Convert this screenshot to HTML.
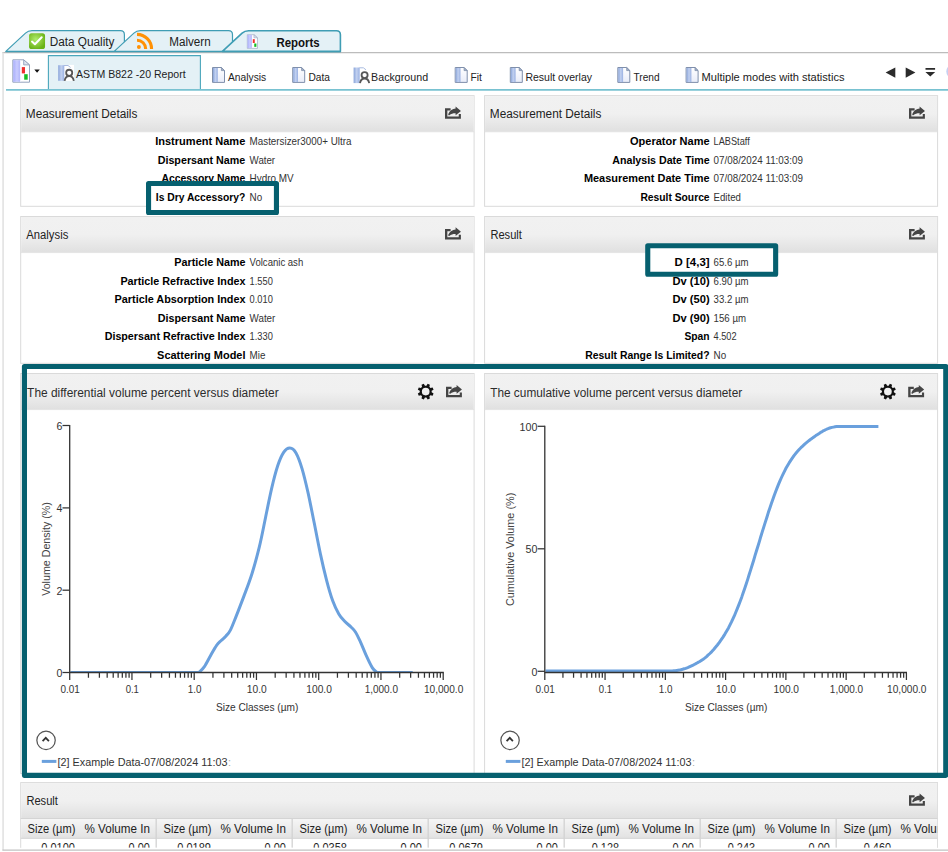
<!DOCTYPE html>
<html lang="en"><head><meta charset="utf-8"><title>Reports</title>
<style>
html,body{margin:0;padding:0;background:#fff;}
body{width:948px;height:852px;overflow:hidden;}
svg{display:block;font-family:"Liberation Sans", sans-serif;}
</style></head><body>
<svg width="948" height="852" viewBox="0 0 948 852">
<defs>
<linearGradient id="hdr" x1="0" y1="0" x2="0" y2="1"><stop offset="0" stop-color="#f1f1f1"/><stop offset="0.5" stop-color="#f0f0f0"/><stop offset="1" stop-color="#e0e0e0"/></linearGradient>
<linearGradient id="thd" x1="0" y1="0" x2="0" y2="1"><stop offset="0" stop-color="#f6f6f6"/><stop offset="1" stop-color="#e2e2e2"/></linearGradient>
<linearGradient id="docb" x1="0" y1="0" x2="1" y2="0"><stop offset="0" stop-color="#8aa5da"/><stop offset="0.5" stop-color="#c2d1f0"/><stop offset="1" stop-color="#9ab1e2"/></linearGradient>
<linearGradient id="docw" x1="0" y1="0" x2="0" y2="1"><stop offset="0" stop-color="#ffffff"/><stop offset="1" stop-color="#e8ecf9"/></linearGradient>
<linearGradient id="repb" x1="0" y1="0" x2="1" y2="0"><stop offset="0" stop-color="#a9aefb"/><stop offset="0.5" stop-color="#c9ccff"/><stop offset="0.85" stop-color="#b6bafa"/><stop offset="1" stop-color="#eceeff"/></linearGradient>
<radialGradient id="grn" cx="0.42" cy="0.4" r="0.62"><stop offset="0" stop-color="#aeee6e"/><stop offset="0.55" stop-color="#8ccc3e"/><stop offset="1" stop-color="#69b317"/></radialGradient>
<g id="share" fill="#454545">
 <path d="M0,1.6 H5.6 V3.95 H2.35 V9.85 H13.75 V7.45 H15.9 V12.2 H0 Z"/>
 <path d="M10.6,-0.1 L15.95,4.3 L10.6,8.6 V6.7 C8.2,6.6 6.3,7.2 4.3,8.7 C3.4,8.8 3.0,8.0 3.4,7.1 C4.9,3.9 7.5,2.2 10.6,2.0 Z"/>
</g>
<g id="doc">
 <path d="M0.5,0.5 H9.4 L12.5,3.6 V15.4 H0.5 Z" fill="url(#docw)" stroke="#7f8fab" stroke-width="1"/>
 <rect x="1" y="1" width="4.8" height="14" fill="url(#docb)"/>
 <path d="M9.4,0.5 V3.6 H12.5 Z" fill="#a5b2ca" stroke="#7f8fab" stroke-width="0.8"/>
</g>
<g id="docp">
 <rect x="6" y="0" width="10" height="16" fill="#fff"/>
 <rect x="0.2" y="0.3" width="6.1" height="15.6" fill="url(#docb)"/>
 <path d="M6,0.6 H10 L12.6,2.6" fill="none" stroke="#a9bbe0" stroke-width="1"/>
 <circle cx="11.2" cy="7.9" r="3.05" fill="#fff" stroke="#575757" stroke-width="1.8"/>
 <path d="M6.6,16 C7.2,12.6 9,11.3 11.2,11.3 C13.4,11.3 15.2,12.6 15.8,16" fill="none" stroke="#575757" stroke-width="1.8"/>
</g>
<g id="gear" fill="#111">
 <path fill-rule="evenodd" d="M5.95,0.73 L7.86,1.95 L6.94,4.18 L4.73,3.69 L3.69,4.73 L4.18,6.94 L1.95,7.86 L0.73,5.95 L-0.73,5.95 L-1.95,7.86 L-4.18,6.94 L-3.69,4.73 L-4.73,3.69 L-6.94,4.18 L-7.86,1.95 L-5.95,0.73 L-5.95,-0.73 L-7.86,-1.95 L-6.94,-4.18 L-4.73,-3.69 L-3.69,-4.73 L-4.18,-6.94 L-1.95,-7.86 L-0.73,-5.95 L0.73,-5.95 L1.95,-7.86 L4.18,-6.94 L3.69,-4.73 L4.73,-3.69 L6.94,-4.18 L7.86,-1.95 L5.95,-0.73 Z M3.85,0 A3.85,3.85 0 1 0 -3.85,0 A3.85,3.85 0 1 0 3.85,0 Z"/>
</g>
</defs>
<rect x="0" y="0" width="948" height="852" fill="#fff"/>
<path d="M2.4,52.6 H948" stroke="#bcbcbc" stroke-width="1.1" fill="none"/>
<path d="M3.1,52.6 V850.2" stroke="#e2e2e2" stroke-width="1.6" fill="none"/>
<path d="M5.8,51.4 L25.5,33.1 Q28.1,30.7 32.0,30.7 H120.4 Q124.4,30.7 124.4,34.7 V51.4 Z" fill="#e4f1f6" stroke="#3f9db4" stroke-width="1.2" stroke-linejoin="round"/>
<path d="M114.2,51.4 L133.9,33.1 Q136.5,30.7 140.4,30.7 H228.5 Q232.5,30.7 232.5,34.7 V51.4 Z" fill="#e4f1f6" stroke="#3f9db4" stroke-width="1.2" stroke-linejoin="round"/>
<path d="M222.4,51.4 L242.1,33.1 Q244.7,30.7 248.6,30.7 H336.4 Q340.4,30.7 340.4,34.7 V51.4 Z" fill="#e4f1f6" stroke="#3f9db4" stroke-width="1.6" stroke-linejoin="round"/>
<path d="M5.8,51.6 H340.6" stroke="#3f9db4" stroke-width="1.3"/>
<rect x="29.05" y="33.2" width="16" height="15.8" rx="2.6" fill="url(#grn)"/>
<path d="M32.0,41.6 L34.9,44.3 L41.7,37.2" fill="none" stroke="#fff" stroke-width="2.0" stroke-linecap="round" stroke-linejoin="round"/>
<text x="49.7" y="45.9" font-size="12" text-anchor="start" textLength="64.8" lengthAdjust="spacingAndGlyphs" fill="#222">Data Quality</text>
<g fill="none" stroke="#ff9105" stroke-width="3.1"><path d="M137,34.35 A14.55,14.55 0 0 1 151.55,48.9"/><path d="M137,40.2 A8.7,8.7 0 0 1 145.7,48.9"/></g><circle cx="138.9" cy="47" r="1.95" fill="#ff9105"/>
<text x="169.3" y="45.9" font-size="12" text-anchor="start" textLength="41.4" lengthAdjust="spacingAndGlyphs" fill="#222">Malvern</text>
<g transform="translate(247,34.4) scale(0.61)"><path d="M0.5,0.5 H11.4 L17.2,5.6 V22.9 H0.5 Z" fill="#fff" stroke="#94a3bd" stroke-width="1"/><rect x="0.9" y="0.9" width="7.4" height="21.6" fill="url(#repb)"/><path d="M11.4,0.5 V5.6 H17.2 Z" fill="#dde4f0" stroke="#94a3bd" stroke-width="0.9" stroke-linejoin="round"/><rect x="9.5" y="7.8" width="3.2" height="6.3" fill="#f03030"/><rect x="11.9" y="14.9" width="3.5" height="5.5" fill="#14c024"/></g>
<text x="276.5" y="46.6" font-size="12" font-weight="bold" text-anchor="start" textLength="43.2" lengthAdjust="spacingAndGlyphs" fill="#111">Reports</text>
<g transform="translate(12.3,59.3) scale(1.0)"><path d="M0.5,0.5 H11.4 L17.2,5.6 V22.9 H0.5 Z" fill="#fff" stroke="#94a3bd" stroke-width="1"/><rect x="0.9" y="0.9" width="7.4" height="21.6" fill="url(#repb)"/><path d="M11.4,0.5 V5.6 H17.2 Z" fill="#dde4f0" stroke="#94a3bd" stroke-width="0.9" stroke-linejoin="round"/><rect x="9.5" y="7.8" width="3.2" height="6.3" fill="#f03030"/><rect x="11.9" y="14.9" width="3.5" height="5.5" fill="#14c024"/></g>
<path d="M34.3,69.5 H39.8 L37.05,72.7 Z" fill="#111"/>
<path d="M48.4,89.5 V55.6 H200.4 V89.5" fill="#e4f1f6" stroke="#4aa6bb" stroke-width="1.1"/>
<path d="M6,89.85 H948" stroke="#78c2d1" stroke-width="1.7"/>
<use href="#docp" x="58" y="64.9"/>
<text x="76.0" y="77.8" font-size="11" text-anchor="start" textLength="109.6" lengthAdjust="spacingAndGlyphs" fill="#222">ASTM B822 -20 Report</text>
<use href="#doc" x="212" y="67.0"/>
<text x="228.0" y="80.9" font-size="11" text-anchor="start" textLength="38.2" lengthAdjust="spacingAndGlyphs" fill="#222">Analysis</text>
<use href="#doc" x="292.2" y="67.0"/>
<text x="308.4" y="80.9" font-size="11" text-anchor="start" textLength="21.5" lengthAdjust="spacingAndGlyphs" fill="#222">Data</text>
<use href="#docp" x="353.4" y="67.2"/>
<text x="371.1" y="80.9" font-size="11" text-anchor="start" textLength="57.0" lengthAdjust="spacingAndGlyphs" fill="#222">Background</text>
<use href="#doc" x="454.7" y="67.0"/>
<text x="470.4" y="80.9" font-size="11" text-anchor="start" textLength="11.4" lengthAdjust="spacingAndGlyphs" fill="#222">Fit</text>
<use href="#doc" x="509.8" y="67.0"/>
<text x="525.4" y="80.9" font-size="11" text-anchor="start" textLength="66.6" lengthAdjust="spacingAndGlyphs" fill="#222">Result overlay</text>
<use href="#doc" x="617.3" y="67.0"/>
<text x="633.5" y="80.9" font-size="11" text-anchor="start" textLength="26.1" lengthAdjust="spacingAndGlyphs" fill="#222">Trend</text>
<use href="#doc" x="685.6" y="67.0"/>
<text x="701.6" y="80.9" font-size="11" text-anchor="start" textLength="142.9" lengthAdjust="spacingAndGlyphs" fill="#222">Multiple modes with statistics</text>
<path d="M895.3,67.4 V77.8 L885.6,72.6 Z" fill="#2b2b2b"/>
<path d="M905.7,67.4 V77.8 L915.4,72.6 Z" fill="#2b2b2b"/>
<path d="M925.5,67.9 H935.1 V69.7 H925.5 Z M925.4,71.9 H935.2 L930.3,76.4 Z" fill="#2b2b2b"/>
<circle cx="953.7" cy="71.4" r="7.4" fill="#c6d0f1"/>
<rect x="20.7" y="95.65" width="453.4" height="110.65" fill="#fff" stroke="#dadada" stroke-width="1"/>
<rect x="21.2" y="96.15" width="452.4" height="35.4" fill="url(#hdr)"/>
<path d="M20.7,131.75 H474.09999999999997" stroke="#dedede" stroke-width="0.8"/>
<use href="#share" x="445.0" y="106.6"/>
<text x="25.8" y="118.3" font-size="12" text-anchor="start" textLength="111.6" lengthAdjust="spacingAndGlyphs" fill="#222">Measurement Details</text>
<text x="245.3" y="145.2" font-size="11" font-weight="bold" text-anchor="end" textLength="90.1" lengthAdjust="spacingAndGlyphs" fill="#000">Instrument Name</text>
<text x="249.6" y="145.2" font-size="10.2" text-anchor="start" textLength="101.8" lengthAdjust="spacingAndGlyphs" fill="#333">Mastersizer3000+ Ultra</text>
<text x="245.3" y="163.7" font-size="11" font-weight="bold" text-anchor="end" textLength="87.6" lengthAdjust="spacingAndGlyphs" fill="#000">Dispersant Name</text>
<text x="249.6" y="163.7" font-size="10.2" text-anchor="start" textLength="25.5" lengthAdjust="spacingAndGlyphs" fill="#333">Water</text>
<text x="245.3" y="182.2" font-size="11" font-weight="bold" text-anchor="end" textLength="83.8" lengthAdjust="spacingAndGlyphs" fill="#000">Accessory Name</text>
<text x="249.6" y="182.2" font-size="10.2" text-anchor="start" textLength="44.1" lengthAdjust="spacingAndGlyphs" fill="#333">Hydro MV</text>
<text x="245.3" y="200.8" font-size="11" font-weight="bold" text-anchor="end" textLength="89.5" lengthAdjust="spacingAndGlyphs" fill="#000">Is Dry Accessory?</text>
<text x="249.6" y="200.8" font-size="10.2" text-anchor="start" textLength="12.6" lengthAdjust="spacingAndGlyphs" fill="#333">No</text>
<rect x="484.6" y="95.65" width="453.0" height="110.65" fill="#fff" stroke="#dadada" stroke-width="1"/>
<rect x="485.1" y="96.15" width="452.0" height="35.4" fill="url(#hdr)"/>
<path d="M484.6,131.75 H937.6" stroke="#dedede" stroke-width="0.8"/>
<use href="#share" x="909.0" y="106.6"/>
<text x="489.8" y="118.3" font-size="12" text-anchor="start" textLength="111.6" lengthAdjust="spacingAndGlyphs" fill="#222">Measurement Details</text>
<text x="709.6" y="145.2" font-size="11" font-weight="bold" text-anchor="end" textLength="79.6" lengthAdjust="spacingAndGlyphs" fill="#000">Operator Name</text>
<text x="713.6" y="145.2" font-size="10.2" text-anchor="start" textLength="36.1" lengthAdjust="spacingAndGlyphs" fill="#333">LABStaff</text>
<text x="709.6" y="163.7" font-size="11" font-weight="bold" text-anchor="end" textLength="97.3" lengthAdjust="spacingAndGlyphs" fill="#000">Analysis Date Time</text>
<text x="713.6" y="163.7" font-size="10.2" text-anchor="start" textLength="89.3" lengthAdjust="spacingAndGlyphs" fill="#333">07/08/2024 11:03:09</text>
<text x="709.6" y="182.2" font-size="11" font-weight="bold" text-anchor="end" textLength="125.7" lengthAdjust="spacingAndGlyphs" fill="#000">Measurement Date Time</text>
<text x="713.6" y="182.2" font-size="10.2" text-anchor="start" textLength="89.3" lengthAdjust="spacingAndGlyphs" fill="#333">07/08/2024 11:03:09</text>
<text x="709.6" y="200.8" font-size="11" font-weight="bold" text-anchor="end" textLength="69.2" lengthAdjust="spacingAndGlyphs" fill="#000">Result Source</text>
<text x="713.6" y="200.8" font-size="10.2" text-anchor="start" textLength="27.3" lengthAdjust="spacingAndGlyphs" fill="#333">Edited</text>
<rect x="20.7" y="216.5" width="453.4" height="146.8" fill="#fff" stroke="#dadada" stroke-width="1"/>
<rect x="21.2" y="217.0" width="452.4" height="35.4" fill="url(#hdr)"/>
<path d="M20.7,252.6 H474.09999999999997" stroke="#dedede" stroke-width="0.8"/>
<use href="#share" x="445.0" y="227.4"/>
<text x="26.3" y="239.2" font-size="12" text-anchor="start" textLength="42.0" lengthAdjust="spacingAndGlyphs" fill="#222">Analysis</text>
<text x="245.5" y="266.2" font-size="11" font-weight="bold" text-anchor="end" textLength="71.2" lengthAdjust="spacingAndGlyphs" fill="#000">Particle Name</text>
<text x="249.6" y="266.2" font-size="10.2" text-anchor="start" textLength="53.6" lengthAdjust="spacingAndGlyphs" fill="#333">Volcanic ash</text>
<text x="245.5" y="284.7" font-size="11" font-weight="bold" text-anchor="end" textLength="125.1" lengthAdjust="spacingAndGlyphs" fill="#000">Particle Refractive Index</text>
<text x="249.6" y="284.7" font-size="10.2" text-anchor="start" textLength="23.2" lengthAdjust="spacingAndGlyphs" fill="#333">1.550</text>
<text x="245.5" y="303.2" font-size="11" font-weight="bold" text-anchor="end" textLength="130.9" lengthAdjust="spacingAndGlyphs" fill="#000">Particle Absorption Index</text>
<text x="249.6" y="303.2" font-size="10.2" text-anchor="start" textLength="23.2" lengthAdjust="spacingAndGlyphs" fill="#333">0.010</text>
<text x="245.5" y="321.8" font-size="11" font-weight="bold" text-anchor="end" textLength="87.7" lengthAdjust="spacingAndGlyphs" fill="#000">Dispersant Name</text>
<text x="249.6" y="321.8" font-size="10.2" text-anchor="start" textLength="25.7" lengthAdjust="spacingAndGlyphs" fill="#333">Water</text>
<text x="245.5" y="340.3" font-size="11" font-weight="bold" text-anchor="end" textLength="140.8" lengthAdjust="spacingAndGlyphs" fill="#000">Dispersant Refractive Index</text>
<text x="249.6" y="340.3" font-size="10.2" text-anchor="start" textLength="23.2" lengthAdjust="spacingAndGlyphs" fill="#333">1.330</text>
<text x="245.5" y="358.8" font-size="11" font-weight="bold" text-anchor="end" textLength="88.4" lengthAdjust="spacingAndGlyphs" fill="#000">Scattering Model</text>
<text x="249.6" y="358.8" font-size="10.2" text-anchor="start" textLength="15.8" lengthAdjust="spacingAndGlyphs" fill="#333">Mie</text>
<rect x="484.6" y="216.5" width="453.0" height="146.8" fill="#fff" stroke="#dadada" stroke-width="1"/>
<rect x="485.1" y="217.0" width="452.0" height="35.4" fill="url(#hdr)"/>
<path d="M484.6,252.6 H937.6" stroke="#dedede" stroke-width="0.8"/>
<use href="#share" x="909.0" y="227.4"/>
<text x="490.4" y="239.2" font-size="12" text-anchor="start" textLength="31.5" lengthAdjust="spacingAndGlyphs" fill="#222">Result</text>
<text x="709.6" y="266.2" font-size="11" font-weight="bold" text-anchor="end" textLength="35.0" lengthAdjust="spacingAndGlyphs" fill="#000">D [4,3]</text>
<text x="713.6" y="266.2" font-size="10.2" text-anchor="start" textLength="34.9" lengthAdjust="spacingAndGlyphs" fill="#333">65.6 µm</text>
<text x="709.6" y="284.7" font-size="11" font-weight="bold" text-anchor="end" textLength="37.1" lengthAdjust="spacingAndGlyphs" fill="#000">Dv (10)</text>
<text x="713.6" y="284.7" font-size="10.2" text-anchor="start" textLength="34.9" lengthAdjust="spacingAndGlyphs" fill="#333">6.90 µm</text>
<text x="709.6" y="303.2" font-size="11" font-weight="bold" text-anchor="end" textLength="37.1" lengthAdjust="spacingAndGlyphs" fill="#000">Dv (50)</text>
<text x="713.6" y="303.2" font-size="10.2" text-anchor="start" textLength="34.9" lengthAdjust="spacingAndGlyphs" fill="#333">33.2 µm</text>
<text x="709.6" y="321.8" font-size="11" font-weight="bold" text-anchor="end" textLength="37.1" lengthAdjust="spacingAndGlyphs" fill="#000">Dv (90)</text>
<text x="713.6" y="321.8" font-size="10.2" text-anchor="start" textLength="32.4" lengthAdjust="spacingAndGlyphs" fill="#333">156 µm</text>
<text x="709.6" y="340.3" font-size="11" font-weight="bold" text-anchor="end" textLength="25.2" lengthAdjust="spacingAndGlyphs" fill="#000">Span</text>
<text x="713.6" y="340.3" font-size="10.2" text-anchor="start" textLength="23.0" lengthAdjust="spacingAndGlyphs" fill="#333">4.502</text>
<text x="709.6" y="358.8" font-size="11" font-weight="bold" text-anchor="end" textLength="124.4" lengthAdjust="spacingAndGlyphs" fill="#000">Result Range Is Limited?</text>
<text x="713.6" y="358.8" font-size="10.2" text-anchor="start" textLength="12.6" lengthAdjust="spacingAndGlyphs" fill="#333">No</text>
<rect x="20.7" y="373.5" width="453.4" height="400" fill="#fff" stroke="#dadada" stroke-width="1"/>
<rect x="21.2" y="374.0" width="452.4" height="35.4" fill="url(#hdr)"/>
<path d="M20.7,409.59999999999997 H474.09999999999997" stroke="#dedede" stroke-width="0.8"/>
<use href="#share" x="446.0" y="385.1"/>
<use href="#gear" x="425.7" y="391.6"/>
<text x="27.1" y="397.1" font-size="12" text-anchor="start" textLength="251.6" lengthAdjust="spacingAndGlyphs" fill="#2c2c2c">The differential volume percent versus diameter</text>
<rect x="484.6" y="373.5" width="453.0" height="400" fill="#fff" stroke="#dadada" stroke-width="1"/>
<rect x="485.1" y="374.0" width="452.0" height="35.4" fill="url(#hdr)"/>
<path d="M484.6,409.59999999999997 H937.6" stroke="#dedede" stroke-width="0.8"/>
<use href="#share" x="908.2" y="385.1"/>
<use href="#gear" x="887.9" y="391.6"/>
<text x="490.2" y="397.1" font-size="12" text-anchor="start" textLength="252.0" lengthAdjust="spacingAndGlyphs" fill="#2c2c2c">The cumulative volume percent versus diameter</text>
<rect x="20.7" y="782.6" width="916.9" height="80" fill="#fff" stroke="#dadada" stroke-width="1"/>
<rect x="21.2" y="783.1" width="915.9" height="35.4" fill="url(#hdr)"/>
<use href="#share" x="909.0" y="793.6"/>
<text x="26.4" y="805.2" font-size="12" text-anchor="start" textLength="31.5" lengthAdjust="spacingAndGlyphs" fill="#222">Result</text>
<rect x="21.2" y="818.5" width="915.9" height="19.8" fill="url(#thd)"/>
<path d="M20.7,818.5 H937.6 M20.7,838.3 H937.6" stroke="#d4d4d4" stroke-width="1"/>
<clipPath id="tclip"><rect x="0" y="800" width="937.2" height="47.8"/></clipPath>
<g clip-path="url(#tclip)">
<text x="27.6" y="832.6" font-size="12" text-anchor="start" textLength="47.8" lengthAdjust="spacingAndGlyphs" fill="#222">Size (µm)</text>
<text x="84.5" y="832.6" font-size="12" text-anchor="start" textLength="65.4" lengthAdjust="spacingAndGlyphs" fill="#222">% Volume In</text>
<text x="75.0" y="852.2" font-size="12" text-anchor="end" textLength="33.7" lengthAdjust="spacingAndGlyphs" fill="#222">0.0100</text>
<text x="149.8" y="852.2" font-size="12" text-anchor="end" textLength="21.3" lengthAdjust="spacingAndGlyphs" fill="#222">0.00</text>
<path d="M156.2,819 V848" stroke="#d2d2d2" stroke-width="1.3"/>
<text x="163.6" y="832.6" font-size="12" text-anchor="start" textLength="47.8" lengthAdjust="spacingAndGlyphs" fill="#222">Size (µm)</text>
<text x="220.5" y="832.6" font-size="12" text-anchor="start" textLength="65.4" lengthAdjust="spacingAndGlyphs" fill="#222">% Volume In</text>
<text x="211.0" y="852.2" font-size="12" text-anchor="end" textLength="33.7" lengthAdjust="spacingAndGlyphs" fill="#222">0.0189</text>
<text x="285.8" y="852.2" font-size="12" text-anchor="end" textLength="21.3" lengthAdjust="spacingAndGlyphs" fill="#222">0.00</text>
<path d="M292.2,819 V848" stroke="#d2d2d2" stroke-width="1.3"/>
<text x="299.6" y="832.6" font-size="12" text-anchor="start" textLength="47.8" lengthAdjust="spacingAndGlyphs" fill="#222">Size (µm)</text>
<text x="356.5" y="832.6" font-size="12" text-anchor="start" textLength="65.4" lengthAdjust="spacingAndGlyphs" fill="#222">% Volume In</text>
<text x="347.0" y="852.2" font-size="12" text-anchor="end" textLength="33.7" lengthAdjust="spacingAndGlyphs" fill="#222">0.0358</text>
<text x="421.8" y="852.2" font-size="12" text-anchor="end" textLength="21.3" lengthAdjust="spacingAndGlyphs" fill="#222">0.00</text>
<path d="M428.2,819 V848" stroke="#d2d2d2" stroke-width="1.3"/>
<text x="435.6" y="832.6" font-size="12" text-anchor="start" textLength="47.8" lengthAdjust="spacingAndGlyphs" fill="#222">Size (µm)</text>
<text x="492.5" y="832.6" font-size="12" text-anchor="start" textLength="65.4" lengthAdjust="spacingAndGlyphs" fill="#222">% Volume In</text>
<text x="483.0" y="852.2" font-size="12" text-anchor="end" textLength="33.7" lengthAdjust="spacingAndGlyphs" fill="#222">0.0679</text>
<text x="557.8" y="852.2" font-size="12" text-anchor="end" textLength="21.3" lengthAdjust="spacingAndGlyphs" fill="#222">0.00</text>
<path d="M564.2,819 V848" stroke="#d2d2d2" stroke-width="1.3"/>
<text x="571.6" y="832.6" font-size="12" text-anchor="start" textLength="47.8" lengthAdjust="spacingAndGlyphs" fill="#222">Size (µm)</text>
<text x="628.5" y="832.6" font-size="12" text-anchor="start" textLength="65.4" lengthAdjust="spacingAndGlyphs" fill="#222">% Volume In</text>
<text x="619.0" y="852.2" font-size="12" text-anchor="end" textLength="27.2" lengthAdjust="spacingAndGlyphs" fill="#222">0.128</text>
<text x="693.8" y="852.2" font-size="12" text-anchor="end" textLength="21.3" lengthAdjust="spacingAndGlyphs" fill="#222">0.00</text>
<path d="M700.2,819 V848" stroke="#d2d2d2" stroke-width="1.3"/>
<text x="707.6" y="832.6" font-size="12" text-anchor="start" textLength="47.8" lengthAdjust="spacingAndGlyphs" fill="#222">Size (µm)</text>
<text x="764.5" y="832.6" font-size="12" text-anchor="start" textLength="65.4" lengthAdjust="spacingAndGlyphs" fill="#222">% Volume In</text>
<text x="755.0" y="852.2" font-size="12" text-anchor="end" textLength="27.2" lengthAdjust="spacingAndGlyphs" fill="#222">0.243</text>
<text x="829.8" y="852.2" font-size="12" text-anchor="end" textLength="21.3" lengthAdjust="spacingAndGlyphs" fill="#222">0.00</text>
<path d="M836.2,819 V848" stroke="#d2d2d2" stroke-width="1.3"/>
<text x="843.6" y="832.6" font-size="12" text-anchor="start" textLength="47.8" lengthAdjust="spacingAndGlyphs" fill="#222">Size (µm)</text>
<text x="900.5" y="832.6" font-size="12" text-anchor="start" textLength="65.4" lengthAdjust="spacingAndGlyphs" fill="#222">% Volume In</text>
<text x="891.0" y="852.2" font-size="12" text-anchor="end" textLength="27.2" lengthAdjust="spacingAndGlyphs" fill="#222">0.460</text>
<text x="965.8" y="852.2" font-size="12" text-anchor="end" textLength="21.3" lengthAdjust="spacingAndGlyphs" fill="#222">0.00</text>
</g>
<rect x="938.2" y="778" width="10" height="71" fill="#fff"/>
<rect x="3.9" y="847.8" width="945" height="5" fill="#fff"/>
<path d="M2.4,850.2 H948" stroke="#c2c2c2" stroke-width="1.3"/>
<clipPath id="pc1"><rect x="70.3" y="400" width="400" height="272.2"/></clipPath>
<path clip-path="url(#pc1)" d="M70.2,672.5 L198.9,672.5 C199.8,671.5 202.5,669.5 204.4,666.7 C206.3,663.9 208.5,659.3 210.5,655.7 C212.5,652.1 214.8,647.8 216.6,645.3 C218.4,642.8 219.7,642.0 221.2,640.5 C222.7,639.0 224.3,637.9 225.8,636.2 C227.3,634.5 228.6,633.6 230.4,630.1 C232.2,626.6 234.2,621.1 236.5,615.4 C238.8,609.6 241.5,602.5 244.1,595.6 C246.7,588.7 249.2,582.4 251.8,574.2 C254.4,566.1 257.1,556.1 259.4,546.7 C261.7,537.3 263.5,527.4 265.5,517.7 C267.5,508.0 269.6,497.4 271.6,488.7 C273.6,480.0 275.7,471.9 277.7,465.8 C279.7,459.7 281.8,455.1 283.8,452.1 C285.8,449.2 287.9,448.0 289.9,448.1 C291.9,448.2 294.0,449.5 296.0,453.0 C298.0,456.5 300.1,462.2 302.1,468.9 C304.1,475.6 306.1,484.2 308.2,493.3 C310.2,502.4 312.3,513.6 314.4,523.8 C316.4,534.0 318.5,545.0 320.5,554.4 C322.5,563.8 324.6,572.6 326.6,580.3 C328.6,588.0 330.7,595.2 332.7,600.8 C334.7,606.4 336.8,610.4 338.8,613.9 C340.8,617.4 342.9,619.3 344.9,621.5 C346.9,623.7 349.2,625.2 351.0,627.0 C352.8,628.8 354.1,629.8 355.6,632.2 C357.1,634.6 358.4,637.5 360.2,641.4 C362.0,645.3 364.3,651.3 366.3,655.7 C368.3,660.1 370.6,665.1 372.4,667.9 C374.2,670.7 376.1,671.7 376.9,672.5 L412.7,672.5" fill="none" stroke="#6aa0dd" stroke-width="3" stroke-linejoin="round"/>
<path d="M69.7,424.9 V672.5 H443.8" fill="none" stroke="#333" stroke-width="1.3"/>
<path d="M69.70,672.5 v7.6 M88.44,672.5 v5.2 M99.40,672.5 v5.2 M107.18,672.5 v5.2 M113.21,672.5 v5.2 M118.14,672.5 v5.2 M122.31,672.5 v5.2 M125.92,672.5 v5.2 M129.10,672.5 v5.2 M131.95,672.5 v7.6 M150.69,672.5 v5.2 M161.65,672.5 v5.2 M169.43,672.5 v5.2 M175.46,672.5 v5.2 M180.39,672.5 v5.2 M184.56,672.5 v5.2 M188.17,672.5 v5.2 M191.35,672.5 v5.2 M194.20,672.5 v7.6 M212.94,672.5 v5.2 M223.90,672.5 v5.2 M231.68,672.5 v5.2 M237.71,672.5 v5.2 M242.64,672.5 v5.2 M246.81,672.5 v5.2 M250.42,672.5 v5.2 M253.60,672.5 v5.2 M256.45,672.5 v7.6 M275.19,672.5 v5.2 M286.15,672.5 v5.2 M293.93,672.5 v5.2 M299.96,672.5 v5.2 M304.89,672.5 v5.2 M309.06,672.5 v5.2 M312.67,672.5 v5.2 M315.85,672.5 v5.2 M318.70,672.5 v7.6 M337.44,672.5 v5.2 M348.40,672.5 v5.2 M356.18,672.5 v5.2 M362.21,672.5 v5.2 M367.14,672.5 v5.2 M371.31,672.5 v5.2 M374.92,672.5 v5.2 M378.10,672.5 v5.2 M380.95,672.5 v7.6 M399.69,672.5 v5.2 M410.65,672.5 v5.2 M418.43,672.5 v5.2 M424.46,672.5 v5.2 M429.39,672.5 v5.2 M433.56,672.5 v5.2 M437.17,672.5 v5.2 M440.35,672.5 v5.2 M443.20,672.5 v7.6" stroke="#333" stroke-width="1.25" fill="none"/>
<path d="M62.5,425.5 H69.7" stroke="#333" stroke-width="1.25"/>
<text x="62.3" y="430.0" font-size="10.8" text-anchor="end" textLength="5.9" lengthAdjust="spacingAndGlyphs" fill="#333">6</text>
<path d="M62.5,507.9 H69.7" stroke="#333" stroke-width="1.25"/>
<text x="62.3" y="512.4" font-size="10.8" text-anchor="end" textLength="5.9" lengthAdjust="spacingAndGlyphs" fill="#333">4</text>
<path d="M62.5,590.2 H69.7" stroke="#333" stroke-width="1.25"/>
<text x="62.3" y="594.7" font-size="10.8" text-anchor="end" textLength="5.9" lengthAdjust="spacingAndGlyphs" fill="#333">2</text>
<path d="M62.5,672.5 H69.7" stroke="#333" stroke-width="1.25"/>
<text x="62.3" y="677.0" font-size="10.8" text-anchor="end" textLength="5.9" lengthAdjust="spacingAndGlyphs" fill="#333">0</text>
<text x="70.1" y="692.8" font-size="10.8" text-anchor="middle" textLength="19.4" lengthAdjust="spacingAndGlyphs" fill="#333">0.01</text>
<text x="132.3" y="692.8" font-size="10.8" text-anchor="middle" textLength="13.3" lengthAdjust="spacingAndGlyphs" fill="#333">0.1</text>
<text x="194.6" y="692.8" font-size="10.8" text-anchor="middle" textLength="13.7" lengthAdjust="spacingAndGlyphs" fill="#333">1.0</text>
<text x="256.8" y="692.8" font-size="10.8" text-anchor="middle" textLength="19.9" lengthAdjust="spacingAndGlyphs" fill="#333">10.0</text>
<text x="319.1" y="692.8" font-size="10.8" text-anchor="middle" textLength="25.5" lengthAdjust="spacingAndGlyphs" fill="#333">100.0</text>
<text x="381.3" y="692.8" font-size="10.8" text-anchor="middle" textLength="33.3" lengthAdjust="spacingAndGlyphs" fill="#333">1,000.0</text>
<text x="443.6" y="692.8" font-size="10.8" text-anchor="middle" textLength="39.4" lengthAdjust="spacingAndGlyphs" fill="#333">10,000.0</text>
<text x="257.1" y="710.6" font-size="10.9" text-anchor="middle" textLength="82.4" lengthAdjust="spacingAndGlyphs" fill="#333">Size Classes (µm)</text>
<text transform="translate(50.2,549.0) rotate(-90)" font-size="10.9" text-anchor="middle" fill="#444" textLength="93.7" lengthAdjust="spacingAndGlyphs">Volume Density (%)</text>
<clipPath id="pc2"><rect x="545.4" y="400" width="400" height="272.1"/></clipPath>
<path clip-path="url(#pc2)" d="M545.3,670.9 L669.9,670.9 L670.8,670.9 L672.2,670.9 L673.7,670.8 L675.2,670.7 L676.7,670.5 L678.1,670.3 L679.6,670.1 L681.1,669.7 L682.6,669.3 L684.2,668.8 L685.7,668.3 L687.0,667.8 L688.2,667.3 L689.3,666.8 L690.4,666.3 L691.5,665.8 L692.6,665.3 L693.7,664.8 L694.8,664.2 L695.9,663.6 L697.0,663.0 L698.1,662.4 L699.2,661.8 L700.4,661.1 L701.7,660.2 L703.2,659.2 L704.7,658.1 L706.3,656.8 L708.0,655.2 L709.9,653.5 L711.8,651.6 L713.7,649.5 L715.5,647.3 L717.4,645.0 L719.2,642.6 L721.1,639.9 L723.0,637.1 L724.9,634.1 L726.7,631.0 L728.5,627.9 L730.0,624.9 L731.5,621.9 L732.9,618.9 L734.4,615.7 L735.8,612.3 L737.3,608.7 L738.8,604.9 L740.3,601.0 L741.8,596.9 L743.2,592.7 L744.7,588.4 L746.2,584.0 L747.7,579.4 L749.1,574.8 L750.6,570.1 L752.1,565.3 L753.6,560.5 L755.0,555.7 L756.5,550.8 L758.0,546.0 L759.5,541.1 L760.9,536.2 L762.4,531.4 L763.9,526.6 L765.4,521.9 L766.9,517.2 L768.3,512.6 L769.8,508.2 L771.3,503.8 L772.8,499.6 L774.2,495.5 L775.7,491.5 L777.2,487.6 L778.7,483.9 L780.2,480.3 L781.7,477.0 L783.2,473.8 L784.7,470.8 L786.1,468.0 L787.6,465.4 L789.1,462.9 L790.6,460.6 L792.1,458.4 L793.5,456.3 L795.0,454.4 L796.5,452.5 L798.0,450.8 L799.4,449.2 L800.9,447.7 L802.4,446.3 L803.9,444.9 L805.3,443.6 L806.8,442.4 L808.3,441.2 L809.8,440.0 L811.2,438.9 L812.8,437.8 L814.3,436.7 L815.8,435.6 L817.2,434.7 L818.4,433.9 L819.5,433.2 L820.5,432.5 L821.6,431.9 L822.7,431.2 L823.7,430.7 L824.8,430.1 L826.1,429.5 L827.4,428.9 L828.9,428.3 L830.5,427.8 L832.0,427.4 L833.5,427.1 L835.0,426.8 L836.5,426.6 L837.9,426.5 L839.2,426.5 L840.4,426.4 L841.5,426.4 L842.2,426.4 L842.2,426.4 L878.4,426.4" fill="none" stroke="#6aa0dd" stroke-width="3" stroke-linejoin="round"/>
<path d="M544.8,425.7 V672.5 H907.0" fill="none" stroke="#333" stroke-width="1.3"/>
<path d="M544.80,672.5 v7.6 M562.94,672.5 v5.2 M573.56,672.5 v5.2 M581.09,672.5 v5.2 M586.93,672.5 v5.2 M591.70,672.5 v5.2 M595.73,672.5 v5.2 M599.23,672.5 v5.2 M602.31,672.5 v5.2 M605.07,672.5 v7.6 M623.21,672.5 v5.2 M633.83,672.5 v5.2 M641.36,672.5 v5.2 M647.20,672.5 v5.2 M651.97,672.5 v5.2 M656.00,672.5 v5.2 M659.50,672.5 v5.2 M662.58,672.5 v5.2 M665.34,672.5 v7.6 M683.48,672.5 v5.2 M694.10,672.5 v5.2 M701.63,672.5 v5.2 M707.47,672.5 v5.2 M712.24,672.5 v5.2 M716.27,672.5 v5.2 M719.77,672.5 v5.2 M722.85,672.5 v5.2 M725.61,672.5 v7.6 M743.75,672.5 v5.2 M754.37,672.5 v5.2 M761.90,672.5 v5.2 M767.74,672.5 v5.2 M772.51,672.5 v5.2 M776.54,672.5 v5.2 M780.04,672.5 v5.2 M783.12,672.5 v5.2 M785.88,672.5 v7.6 M804.02,672.5 v5.2 M814.64,672.5 v5.2 M822.17,672.5 v5.2 M828.01,672.5 v5.2 M832.78,672.5 v5.2 M836.81,672.5 v5.2 M840.31,672.5 v5.2 M843.39,672.5 v5.2 M846.15,672.5 v7.6 M864.29,672.5 v5.2 M874.91,672.5 v5.2 M882.44,672.5 v5.2 M888.28,672.5 v5.2 M893.05,672.5 v5.2 M897.08,672.5 v5.2 M900.58,672.5 v5.2 M903.66,672.5 v5.2 M906.42,672.5 v7.6" stroke="#333" stroke-width="1.25" fill="none"/>
<path d="M537.5999999999999,426.3 H544.8" stroke="#333" stroke-width="1.25"/>
<text x="537.4" y="430.8" font-size="10.8" text-anchor="end" textLength="17.8" lengthAdjust="spacingAndGlyphs" fill="#333">100</text>
<path d="M537.5999999999999,548.8 H544.8" stroke="#333" stroke-width="1.25"/>
<text x="537.4" y="553.3" font-size="10.8" text-anchor="end" textLength="11.9" lengthAdjust="spacingAndGlyphs" fill="#333">50</text>
<path d="M537.5999999999999,671.3 H544.8" stroke="#333" stroke-width="1.25"/>
<text x="537.4" y="675.8" font-size="10.8" text-anchor="end" textLength="5.9" lengthAdjust="spacingAndGlyphs" fill="#333">0</text>
<text x="545.2" y="692.8" font-size="10.8" text-anchor="middle" textLength="19.4" lengthAdjust="spacingAndGlyphs" fill="#333">0.01</text>
<text x="605.5" y="692.8" font-size="10.8" text-anchor="middle" textLength="13.3" lengthAdjust="spacingAndGlyphs" fill="#333">0.1</text>
<text x="665.7" y="692.8" font-size="10.8" text-anchor="middle" textLength="13.7" lengthAdjust="spacingAndGlyphs" fill="#333">1.0</text>
<text x="726.0" y="692.8" font-size="10.8" text-anchor="middle" textLength="19.9" lengthAdjust="spacingAndGlyphs" fill="#333">10.0</text>
<text x="786.3" y="692.8" font-size="10.8" text-anchor="middle" textLength="25.5" lengthAdjust="spacingAndGlyphs" fill="#333">100.0</text>
<text x="846.5" y="692.8" font-size="10.8" text-anchor="middle" textLength="33.3" lengthAdjust="spacingAndGlyphs" fill="#333">1,000.0</text>
<text x="906.8" y="692.8" font-size="10.8" text-anchor="middle" textLength="39.4" lengthAdjust="spacingAndGlyphs" fill="#333">10,000.0</text>
<text x="726.2" y="710.6" font-size="10.9" text-anchor="middle" textLength="82.4" lengthAdjust="spacingAndGlyphs" fill="#333">Size Classes (µm)</text>
<text transform="translate(513.7,549.4) rotate(-90)" font-size="10.9" text-anchor="middle" fill="#444" textLength="113.4" lengthAdjust="spacingAndGlyphs">Cumulative Volume (%)</text>
<circle cx="46.05" cy="740.35" r="9.2" fill="#fff" stroke="#555" stroke-width="1.25"/>
<path d="M42.6,741.1 L45.75,737.9 L48.9,741.1" fill="none" stroke="#333" stroke-width="1.8"/>
<path d="M41.8,761.4 H56.4" stroke="#6aa0dd" stroke-width="3"/>
<text x="57.5" y="765.8" font-size="10.9" text-anchor="start" textLength="170.0" lengthAdjust="spacingAndGlyphs" fill="#333">[2] Example Data-07/08/2024 11:03</text>
<text x="228.1" y="765.8" font-size="10.9" text-anchor="start" fill="#aaa">:</text>
<circle cx="510.05" cy="740.35" r="9.2" fill="#fff" stroke="#555" stroke-width="1.25"/>
<path d="M506.6,741.1 L509.75,737.9 L512.9,741.1" fill="none" stroke="#333" stroke-width="1.8"/>
<path d="M505.8,761.4 H520.4" stroke="#6aa0dd" stroke-width="3"/>
<text x="521.5" y="765.8" font-size="10.9" text-anchor="start" textLength="170.0" lengthAdjust="spacingAndGlyphs" fill="#333">[2] Example Data-07/08/2024 11:03</text>
<text x="692.1" y="765.8" font-size="10.9" text-anchor="start" fill="#aaa">:</text>
<rect x="148.55" y="183.55" width="127.90" height="29.00" fill="#fff" stroke="#06606f" stroke-width="5.1" stroke-linejoin="round"/>
<rect x="647.75" y="245.75" width="127.90" height="28.50" fill="#fff" stroke="#06606f" stroke-width="5.1" stroke-linejoin="round"/>
<rect x="24.45" y="366.45" width="921.30" height="408.90" fill="none" stroke="#06606f" stroke-width="5.1" stroke-linejoin="round"/>
<text x="245.3" y="200.8" font-size="11" font-weight="bold" text-anchor="end" textLength="89.5" lengthAdjust="spacingAndGlyphs" fill="#000">Is Dry Accessory?</text>
<text x="249.6" y="200.8" font-size="10.2" text-anchor="start" textLength="12.6" lengthAdjust="spacingAndGlyphs" fill="#333">No</text>
<text x="709.6" y="266.2" font-size="11" font-weight="bold" text-anchor="end" textLength="35.0" lengthAdjust="spacingAndGlyphs" fill="#000">D [4,3]</text>
<text x="713.6" y="266.2" font-size="10.2" text-anchor="start" textLength="34.9" lengthAdjust="spacingAndGlyphs" fill="#333">65.6 µm</text>
</svg>
</body></html>
